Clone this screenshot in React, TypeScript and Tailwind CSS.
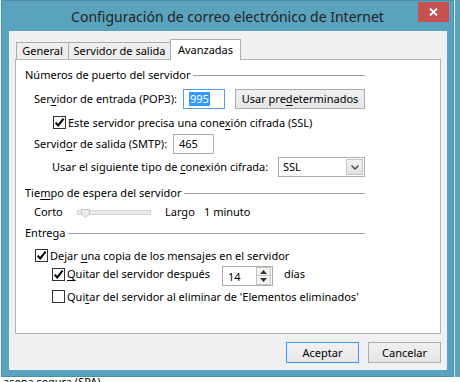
import React from "react";

const U = ({ c }: { c: string }) => (
  <span className="underline underline-offset-[2px] decoration-1">{c}</span>
);

function CheckBox({ checked }: { checked: boolean }) {
  return (
    <span className="w-[13px] h-[13px] border border-[#333333] bg-white flex items-center justify-center shrink-0">
      {checked && (
        <svg width="11" height="11" viewBox="0 0 11 11">
          <path d="M1.6 5.6 L4.2 8.4 L9.6 1.6" fill="none" stroke="#000" strokeWidth="2" />
        </svg>
      )}
    </span>
  );
}

function GroupHeader({ children }: { children: React.ReactNode }) {
  return (
    <div className="flex items-center h-[16px] w-[340px] ml-[9px]">
      <span className="whitespace-nowrap">{children}</span>
      <div className="flex-1 h-px bg-[#a0a0a0] ml-[3px]" />
    </div>
  );
}

function Spacer({ w }: { w: string }) {
  return <div className={`${w} shrink-0`} />;
}

export default function App() {
  return (
    <div className="w-[460px] h-[382px] bg-white overflow-hidden flex flex-col font-['Noto_Sans',sans-serif] text-[11px] leading-[16px] text-black">
      <div className="flex h-[377px] shrink-0">
        <div className="w-[1px] bg-[#f2f2f2]" />
        {/* Window */}
        <div className="w-[453px] h-[377px] bg-[#5aa3be] border border-[#4a8ea8] flex flex-col relative">
          <div className="h-[30px] flex items-center justify-center pt-[1px] text-[14px] text-[#222] whitespace-nowrap">
            Configuración de correo electrónico de Internet
          </div>
          <div className="absolute top-[1px] right-[4px] w-[31px] h-[20px] bg-[#c75050] flex items-center justify-center">
            <svg width="9" height="8" viewBox="0 0 9 8">
              <path d="M1 0.5 L8 7.5 M8 0.5 L1 7.5" stroke="#fff" strokeWidth="1.8" />
            </svg>
          </div>
          {/* Client */}
          <div className="ml-[7px] w-[438px] h-[339px] bg-[#f0f0f0] flex flex-col pt-[8px]">
            {/* Tabs */}
            <div className="flex items-start h-[21px] -mb-[1px] pl-[7px] relative z-10">
              <div className="mt-[3px] w-[52px] h-[17px] border-l border-t border-[#acacac] bg-[#eeeeee] flex items-center justify-center">
                General
              </div>
              <div className="mt-[3px] w-[102px] h-[17px] border-l border-t border-[#acacac] bg-[#eeeeee] flex items-center justify-center">
                Servidor de salida
              </div>
              <div className="w-[71px] h-[21px] border-l border-t border-r border-[#acacac] bg-white flex items-center justify-center pb-[1px]">
                Avanzadas
              </div>
            </div>
            {/* Panel */}
            <div className="ml-[6px] w-[426px] h-[275px] border border-[#b4b4b4] bg-white flex flex-col pt-[7px]">
              <GroupHeader>Números de puerto del servidor</GroupHeader>

              <div className="mt-[6px] h-[20px] flex items-center">
                <Spacer w="w-[18px]" />
                <span className="w-[149px] shrink-0 whitespace-nowrap">
                  Ser<U c="v" />idor de entrada (POP3):
                </span>
                <div className="w-[42px] h-[20px] shrink-0 border border-[#569de5] bg-white flex items-center pl-[5px]">
                  <span className="bg-[#3399ff] text-white leading-[14px] px-[1px]">995</span>
                </div>
                <div className="ml-[10px] w-[130px] h-[20px] shrink-0 border border-[#acacac] bg-linear-to-b from-[#f0f0f0] to-[#e5e5e5] flex items-center justify-center whitespace-nowrap">
                  Usar pre<U c="d" />eterminados
                </div>
              </div>

              <div className="mt-[7px] h-[13px] flex items-center">
                <Spacer w="w-[37px]" />
                <CheckBox checked />
                <span className="ml-[2px] whitespace-nowrap">
                  Este servidor precisa una cone<U c="x" />ión cifrada (SSL)
                </span>
              </div>

              <div className="mt-[5px] h-[20px] flex items-center">
                <Spacer w="w-[18px]" />
                <span className="w-[139px] shrink-0 whitespace-nowrap">
                  Servid<U c="o" />r de salida (SMTP):
                </span>
                <div className="w-[41px] h-[20px] shrink-0 border border-[#abadb3] bg-white flex items-center pl-[5px]">
                  465
                </div>
              </div>

              <div className="mt-[3px] h-[20px] flex items-center">
                <Spacer w="w-[36px]" />
                <span className="w-[226px] shrink-0 whitespace-nowrap">
                  Usar el siguiente tipo de <U c="c" />onexión cifrada:
                </span>
                <div className="w-[87px] h-[20px] shrink-0 border border-[#acacac] bg-white flex items-center">
                  <span className="flex-1 pl-[4px]">SSL</span>
                  <div className="w-[17px] h-[16px] mr-[1px] border border-[#c4c4c4] bg-linear-to-b from-[#f2f2f2] to-[#e2e2e2] flex items-center justify-center">
                    <svg width="8" height="5" viewBox="0 0 8 5">
                      <path d="M0.5 0.5 L4 4 L7.5 0.5" fill="none" stroke="#444" strokeWidth="1.4" />
                    </svg>
                  </div>
                </div>
              </div>

              <div className="mt-[8px]">
                <GroupHeader>
                  Tie<U c="m" />po de espera del servidor
                </GroupHeader>
              </div>

              <div className="mt-[3px] h-[16px] flex items-center">
                <Spacer w="w-[18px]" />
                <span className="w-[43px] shrink-0">Corto</span>
                <div className="relative w-[74px] h-[5px] shrink-0 border border-[#d6d6d6] bg-[#e7eaea]">
                  <svg className="absolute left-[3px] -top-[2px]" width="9" height="9" viewBox="0 0 9 9">
                    <path d="M0.5 0.5 H8.5 V5 L4.5 8.5 L0.5 5 Z" fill="#ececec" stroke="#c6c6c6" strokeWidth="1" />
                  </svg>
                </div>
                <span className="ml-[14px] w-[39px] shrink-0">Largo</span>
                <span>1 minuto</span>
              </div>

              <div className="mt-[5px]">
                <GroupHeader>Entrega</GroupHeader>
              </div>

              <div className="mt-[8px] h-[13px] flex items-center">
                <Spacer w="w-[19px]" />
                <CheckBox checked />
                <span className="ml-[2px] whitespace-nowrap">
                  Dejar <U c="u" />na copia de los mensajes en el servidor
                </span>
              </div>

              <div className="mt-[4px] h-[20px] flex items-start">
                <Spacer w="w-[36px]" />
                <div className="w-[170px] h-[16px] shrink-0 flex items-center">
                  <CheckBox checked />
                  <span className="ml-[2px] whitespace-nowrap">
                    <U c="Q" />uitar del servidor después
                  </span>
                </div>
                <div className="w-[51px] h-[20px] shrink-0 border border-[#abadb3] bg-white flex items-center">
                  <span className="flex-1 pl-[5px] pt-[2px]">14</span>
                  <div className="w-[15px] h-[18px] flex flex-col mr-[1px]">
                    <div className="h-[9px] border border-[#c4c4c4] bg-[#f4f4f4] flex items-center justify-center">
                      <svg width="7" height="4" viewBox="0 0 7 4">
                        <path d="M0 4 L3.5 0 L7 4 Z" fill="#333" />
                      </svg>
                    </div>
                    <div className="h-[9px] border border-t-0 border-[#c4c4c4] bg-[#f4f4f4] flex items-center justify-center">
                      <svg width="7" height="4" viewBox="0 0 7 4">
                        <path d="M0 0 L3.5 4 L7 0 Z" fill="#333" />
                      </svg>
                    </div>
                  </div>
                </div>
                <span className="ml-[11px]">días</span>
              </div>

              <div className="mt-[4px] h-[13px] flex items-center">
                <Spacer w="w-[36px]" />
                <CheckBox checked={false} />
                <span className="ml-[2px] whitespace-nowrap">
                  Qui<U c="t" />ar del servidor al eliminar de 'Elementos eliminados'
                </span>
              </div>
            </div>
            {/* Buttons */}
            <div className="mt-[8px] flex justify-end pr-[6px] gap-[9px]">
              <div className="w-[73px] h-[21px] border border-[#3399ff] bg-linear-to-b from-[#f2f2f2] to-[#e6e6e6] flex items-center justify-center">
                Aceptar
              </div>
              <div className="w-[73px] h-[21px] border border-[#acacac] bg-linear-to-b from-[#f0f0f0] to-[#e5e5e5] flex items-center justify-center">
                Cancelar
              </div>
            </div>
          </div>
        </div>
        <div className="w-[1px] bg-[#dfe9ee]" />
        <div className="flex-1 bg-[#5aa3be]" />
      </div>
      <div className="h-[5px] overflow-hidden pl-[3px]">
        <div className="-mt-[3px] whitespace-nowrap">asena segura (SPA)</div>
      </div>
    </div>
  );
}
